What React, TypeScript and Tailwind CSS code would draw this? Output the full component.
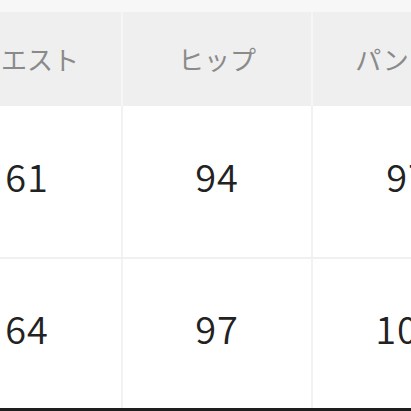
const headers = ["ウエスト", "ヒップ", "パンツ丈"];
const rows = [
  ["61", "94", "97"],
  ["64", "97", "100"],
];

export default function App() {
  return (
    <div
      className="w-[411px] h-[411px] overflow-hidden bg-[#f7f7f7]"
      style={{ fontFamily: '"Noto Sans CJK JP", "Noto Sans", sans-serif' }}
    >
      <div className="h-[12px]" />
      <div className="ml-[-67px] w-[570px]">
        {/* header */}
        <div className="grid grid-cols-[188px_190px_192px] h-[94px] bg-[#efefef]">
          {headers.map((h, i) => (
            <div
              key={h}
              className={`flex items-center justify-center pb-[2px] text-[26px] text-[#8a8a8a] ${
                i > 0 ? "border-l-2 border-[#f6f6f6]" : ""
              }`}
            >
              {h}
            </div>
          ))}
        </div>
        {/* body */}
        <div className="bg-white">
          {rows.map((r, ri) => (
            <div
              key={ri}
              className={`grid grid-cols-[188px_190px_192px] h-[151px] ${
                ri > 0 ? "border-t-2 border-[#f0f0f0]" : ""
              }`}
            >
              {r.map((v, i) => (
                <div
                  key={i}
                  className={`flex items-center justify-center pb-[12px] text-[38px] font-[350] tracking-[1px] text-[#222222] ${
                    i > 0 ? "border-l-2 border-[#f2f2f2]" : ""
                  }`}
                >
                  {v}
                </div>
              ))}
            </div>
          ))}
        </div>
        <div className="h-[4px] bg-[#1e1e1e]" />
      </div>
    </div>
  );
}
